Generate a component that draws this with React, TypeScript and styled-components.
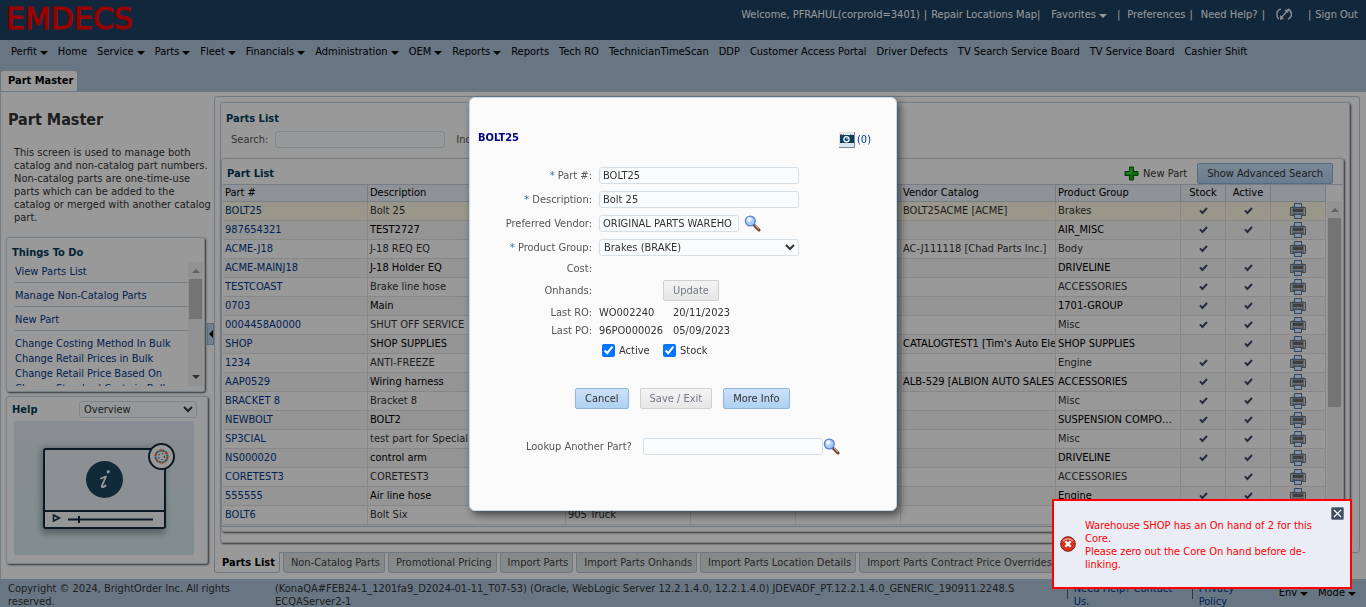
import React from 'react';
import styled, { createGlobalStyle } from 'styled-components';

const GlobalStyle = createGlobalStyle`
  * { box-sizing: border-box; }
  body {
    margin: 0;
    background: #adc4da;
    color: #333;
    overflow: hidden;
    font: 11px/13px Tahoma, 'DejaVu Sans Condensed', 'DejaVu Sans', sans-serif;
  }
  button, input, select { font: inherit; color: inherit; }
  a { color: #00398e; text-decoration: none; }
  h1, h2, p, ul { margin: 0; padding: 0; }
  ul { list-style: none; }
`;

const Page = styled.div`
  display: flex;
  flex-direction: column;
  min-height: 100vh;
`;

/* ---------- top bar ---------- */
const TopBar = styled.header`
  display: flex;
  justify-content: space-between;
  height: 40px;
  padding: 0 8px 0 6px;
  background: #1c4164;
  color: #fff;
  white-space: nowrap;
`;
const Logo = styled.div`
  color: #f00;
  font: 400 30px/37px 'DejaVu Sans', sans-serif;
  -webkit-text-stroke: 1px #f00;
`;
const TopLinks = styled.div`
  display: flex;
  align-items: center;
  height: 28px;
  a { color: #fff; }
`;
const Bar = styled.span<{ $before?: number; $after?: number }>`
  margin-left: ${p => p.$before ?? 0}px;
  margin-right: ${p => p.$after ?? 0}px;
`;
const Caret = styled.span`
  display: inline-block;
  margin-left: 3px;
  border: 4px solid transparent;
  border-top-color: currentColor;
  border-bottom: 0;
`;

/* ---------- navigation ---------- */
const Nav = styled.nav`
  height: 31px;
  padding: 5px 11px 0;
  background: #adc4da;
  ul { display: flex; gap: 10px; white-space: nowrap; }
  a { color: #000; }
`;
const PageTabs = styled.div`
  display: flex;
  padding-left: 1px;
  background: #adc4da;
`;
const PageTab = styled.a`
  height: 20px;
  padding: 0 4px 0 7px;
  border-radius: 3px 3px 0 0;
  background: #fff;
  color: #000;
  font-weight: 700;
  line-height: 20px;
`;

/* ---------- workspace ---------- */
const Workspace = styled.main`
  display: grid;
  grid-template-columns: 206px 7px minmax(0, 1fr);
  height: 488px;
  padding-right: 6px;
  border-left: 1px solid #c3d3e2;
  border-top: 1px solid #b6c8da;
  background: #fff;
`;
const Sidebar = styled.aside`
  padding: 19px 0 0 5px;
  h1 { margin-left: 2px; font-size: 16px; line-height: 18px; color: #333; }
`;
const Intro = styled.p`
  margin: 17px 0 13px 8px;
  white-space: nowrap;
`;
const Panel = styled.section<{ $w: number; $h: number }>`
  width: ${p => p.$w}px;
  height: ${p => p.$h}px;
  margin-bottom: 4px;
  border: 1px solid #c6d5e0;
  border-radius: 3px;
  box-shadow: 1px 1px 2px #555;
  overflow: hidden;
`;
const PanelTitle = styled.h2<{ $inset?: boolean }>`
  padding: ${p => (p.$inset ? '8px 5px 0' : '0')};
  font-size: 11px;
  line-height: 13px;
  color: #043c58;
`;
const TodoBox = styled.div`
  display: flex;
  height: 124px;
  margin: 3px 1px 0 8px;
  overflow: hidden;
`;
const TodoList = styled.ul`
  flex: 1;
  white-space: nowrap;
  overflow: hidden;
`;
const TodoItem = styled.li<{ $ruled?: boolean }>`
  height: ${p => (p.$ruled ? 24 : 15)}px;
  line-height: ${p => (p.$ruled ? 25 : 15)}px;
  border-bottom: ${p => (p.$ruled ? '1px solid #c0cfdc' : '0')};
  &:first-child { height: 21px; line-height: 19px; }
  &:nth-child(4) { margin-top: 5px; }
`;
const Track = styled.div`
  display: flex;
  flex-direction: column;
  align-items: center;
  width: 15px;
  background: #f4f4f4;
`;
const Thumb = styled.div<{ $h: number }>`
  width: 13px;
  height: ${p => p.$h}px;
  background: #c1c1c1;
`;
const Arrow = styled.span<{ $down?: boolean }>`
  margin: ${p => (p.$down ? 'auto 0 7px' : '7px 0 6px')};
  border: 4px solid transparent;
  ${p => (p.$down ? 'border-top-color: #505050; border-bottom: 0;' : 'border-bottom-color: #a3a3a3; border-top: 0;')}
`;
const HelpHead = styled.div`
  display: flex;
  justify-content: space-between;
  align-items: center;
  padding: 4px 10px 3px 5px;
`;
const HelpPicture = styled.div`
  padding-left: 7px;
  svg { display: block; }
`;
const Splitter = styled.button`
  display: flex;
  align-items: center;
  justify-content: center;
  align-self: start;
  width: 7px;
  height: 22px;
  margin-top: 231px;
  padding: 0;
  border: 1px solid #8fb2d6;
  background: #bcd7f5;
`;

const field = `
  height: 17px;
  padding: 0 3px;
  border: 1px solid #d6dfe6;
  border-radius: 3px;
  background: #fafdff;
`;
const TextBox = styled.input<{ $w: number }>`
  ${field}
  width: ${p => p.$w}px;
`;
const Picker = styled.select<{ $w: number }>`
  ${field}
  width: ${p => p.$w}px;
  padding: 0;
`;
const Button = styled.button`
  height: 21px;
  padding: 0 9px;
  border: 1px solid #8fb5dc;
  border-radius: 2px;
  background: linear-gradient(#cde2f8, #aed0f2);
  color: #333;
  line-height: 17px;
  white-space: nowrap;
  &:disabled {
    border-color: #d0d0d0;
    background: linear-gradient(#f4f4f4, #e6e6e6);
    color: #75788a;
  }
`;

/* ---------- parts panel ---------- */
const Content = styled.div`
  margin-top: 4px;
`;
const Frame = styled.div`
  height: 457px;
  padding: 5px 9px 9px 5px;
  border: 1px solid #bccad8;
  border-radius: 3px 3px 3px 0;
`;
const Card = styled.section`
  height: 441px;
  border: 1px solid #c9d3dc;
  border-radius: 3px;
  box-shadow: 1px 1px 2px #555;
`;
const CardHead = styled.div`
  height: 55px;
  padding: 9px 5px 0;
`;
const SearchRow = styled.div`
  display: flex;
  align-items: center;
  margin: 6px 0 0 5px;
  color: #555;
  input { margin: 0 11px 0 7px; }
`;
const ListCard = styled.section`
  height: 374px;
  margin-right: 5px;
  border: 1px solid #c9d3dc;
  border-radius: 3px;
  box-shadow: 1px 1px 2px #555;
`;
const ListHead = styled.div`
  display: flex;
  justify-content: space-between;
  align-items: center;
  height: 25px;
  padding: 4px 10px 0 5px;
`;
const Actions = styled.div`
  display: flex;
  align-items: center;
  gap: 10px;
  a { display: flex; align-items: center; gap: 4px; color: #333; }
`;
const TableArea = styled.div`
  display: flex;
  height: 343px;
  padding-left: 1px;
  border-bottom: 1px solid #b7c8d8;
  overflow: hidden;
`;
const Table = styled.table`
  flex: 1;
  width: 0;
  table-layout: fixed;
  border-collapse: separate;
  border-spacing: 0;
  align-self: flex-start;
  th, td {
    padding: 0 2px;
    border-right: 1px solid #e3e3e3;
    overflow: hidden;
    white-space: nowrap;
    text-align: left;
  }
  th {
    height: 18px;
    border-top: 1px solid #c6d0dd;
    border-right-color: #c6d0dd;
    border-bottom: 1px solid #c6d0dd;
    background: #eff3fb;
    color: #000;
    font-weight: 400;
    line-height: 16px;
  }
  td { height: 19px; border-bottom: 1px solid #e3e3e3; line-height: 18px; }
  th:nth-child(n + 8), td:nth-child(n + 8) { text-align: center; }
  td:nth-child(7) { text-overflow: ellipsis; padding-right: 6px; }
  svg { display: block; margin: 0 auto; }
`;
const Col = styled.col<{ $w: number }>`
  width: ${p => (p.$w ? `${p.$w}px` : 'auto')};
`;
const Row = styled.tr<{ $selected?: boolean }>`
  background: ${p => (p.$selected ? '#fffce4' : '#fff')};
  &:nth-child(even) { background: #f8f8f8; color: #000; }
`;
const TableTrack = styled.div`
  width: 17px;
  padding-top: 16px;
  border-top: 1px solid #c6d0dd;
  ${Track} { height: 326px; margin: 0 auto; }
`;
const BottomTabs = styled.div`
  display: flex;
  gap: 3px;
  white-space: nowrap;
`;
const BottomTab = styled.a<{ $active?: boolean }>`
  height: 21px;
  margin-top: -1px;
  padding: 0 4px 0 7px;
  border: 1px solid #b9c6d6;
  border-top-color: ${p => (p.$active ? '#fff' : '#b9c6d6')};
  border-radius: 0 0 3px 3px;
  background: ${p => (p.$active ? '#fff' : '#dfe5e6')};
  color: ${p => (p.$active ? '#000' : '#444')};
  font-weight: ${p => (p.$active ? 700 : 400)};
  line-height: 20px;
`;

/* ---------- footer ---------- */
const Footer = styled.footer`
  display: grid;
  grid-template-columns: 259px minmax(0, 1fr) 117px 79px auto auto;
  column-gap: 8px;
  height: 28px;
  padding: 3px 8px 0;
  background: #adc4da;
`;
const FootLink = styled.a`
  display: flex;
  gap: 6px;
  &::before { content: ''; width: 1px; height: 13px; margin-top: 4px; background: #555; }
`;
const FootMenu = styled.span`
  padding: 4px 2px 0 0;
  color: #000;
  white-space: nowrap;
`;

/* ---------- dialog ---------- */
const Overlay = styled.div`
  position: fixed;
  inset: 0;
  display: flex;
  align-items: center;
  justify-content: center;
  background: rgba(0, 0, 0, 0.4);
`;
const Dialog = styled.div`
  width: 428px;
  height: 414px;
  padding: 33px 8px 0;
  border: 1px solid #c3d9ee;
  border-radius: 6px;
  background: #fafafa;
  box-shadow: 3px 4px 8px rgba(0, 0, 0, 0.55);
`;
const DialogHead = styled.div`
  display: flex;
  justify-content: space-between;
  height: 33px;
  padding-right: 17px;
  h2 { font-size: 11px; line-height: 14px; color: #000080; }
  a { display: flex; align-items: center; gap: 2px; height: 18px; }
`;
const FormRow = styled.div<{ $h: number }>`
  display: grid;
  grid-template-columns: 114px 1fr;
  column-gap: 7px;
  align-items: center;
  height: ${p => p.$h}px;
  i { color: #2a72a8; font-style: normal; }
`;
const FormLabel = styled.label`
  text-align: right;
  color: #555;
  white-space: nowrap;
`;
const Inline = styled.div<{ $gap?: number; $indent?: number }>`
  display: flex;
  align-items: center;
  gap: ${p => p.$gap ?? 0}px;
  padding-left: ${p => p.$indent ?? 0}px;
`;
const Value = styled.span`
  width: 74px;
`;
const Check = styled.label`
  display: flex;
  align-items: center;
  gap: 4px;
  width: 61px;
  input { width: 13px; height: 13px; margin: 0; }
`;
const ButtonRow = styled.div`
  display: flex;
  gap: 11px;
  margin: 26px 0 29px 97px;
`;
const Lookup = styled.div`
  display: flex;
  align-items: center;
  padding-left: 48px;
  color: #555;
  input { margin-left: 11px; }
`;
const IconButton = styled.button`
  display: flex;
  padding: 0;
  border: 0;
  background: none;
`;

/* ---------- error toast ---------- */
const Toast = styled.div`
  position: fixed;
  right: 14px;
  bottom: 18px;
  display: flex;
  align-items: center;
  gap: 9px;
  width: 300px;
  height: 90px;
  padding: 0 6px;
  border: 2px solid #f00;
  background: #eaedf6;
  color: #f00;
  p { flex: 1; padding-top: 1px; white-space: nowrap; }
  button { align-self: flex-start; margin-top: 6px; }
`;

/* ---------- icons ---------- */
const CheckIcon = () => (
  <svg width="9" height="8" viewBox="0 0 9 8">
    <path d="M1 3.400 L3.400 6 L8 1" fill="none" stroke="#3f4a66" strokeWidth="2" />
  </svg>
);
const PrinterIcon = () => (
  <svg width="16" height="16" viewBox="0 0 16 16">
    <path d="M0.500 4.500h3v8h-3zM12.500 4.500h3v8h-3z" fill="#d4d8dc" stroke="#777" />
    <rect x="3" y="4" width="10" height="8" fill="#9a9da2" stroke="#777" />
    <rect x="4.500" y="0.500" width="7" height="4" fill="#e6f3ff" stroke="#4b7fb2" />
    <path d="M3 6h10v3H3z" fill="#66696d" />
    <path d="M3 9.500h10" stroke="#b8bbc0" />
    <rect x="4.500" y="11.500" width="7" height="4" fill="#e6f3ff" stroke="#4b7fb2" />
  </svg>
);
const Magnifier = () => (
  <svg width="17" height="17" viewBox="0 0 17 17">
    <path d="M10.500 10.500 L15 15" stroke="#6b3d2c" strokeWidth="3" strokeLinecap="round" />
    <path d="M11 10.200 L15 14.200" stroke="#d2a083" strokeWidth="1.200" />
    <circle cx="6.300" cy="6" r="4.900" fill="#a6cdfa" stroke="#5a82cc" strokeWidth="1.300" />
    <circle cx="5.200" cy="4.600" r="2.400" fill="#e9f5ff" />
  </svg>
);
const CameraIcon = () => (
  <svg width="16" height="16" viewBox="0 0 16 16">
    <rect width="16" height="16" fill="#dce4ee" />
    <path d="M15.500 0v15.500H0" fill="none" stroke="#7d8794" />
    <path d="M1 3h3l1-1h6l1 1h3v8H1z" fill="#0b3f60" />
    <path d="M5 2h6v1H5z" fill="#fff" />
    <circle cx="7.500" cy="7.200" r="3.200" fill="#fff" />
    <circle cx="7.500" cy="7.200" r="1.900" fill="#0b3f60" />
    <circle cx="8" cy="6.800" r="0.800" fill="#cfe6f6" />
    <rect x="1" y="2" width="2" height="1" fill="#e07050" />
  </svg>
);
const PlusIcon = () => (
  <svg width="15" height="15" viewBox="0 0 15 15">
    <path d="M5.500 1h4v4.500h4.500v4h-4.500v4.500h-4v-4.500H1v-4h4.500z" fill="#19b219" stroke="#075c07" />
    <path d="M7 2.500v4.500H2.500" fill="none" stroke="#7fe87f" />
  </svg>
);
const LinkIcon = () => (
  <svg width="18" height="13" viewBox="0 0 18 13">
    <g fill="none" stroke="#dfe5ea" strokeWidth="1.500">
      <path d="M5 1C0 2 0 9 3 11" />
      <path d="M12 1c4 2 5 8 0 10" />
      <path d="M5 10 12 2" />
    </g>
    <path d="M4 12l0-5 4 3.500zM13 1l-5 1 4 3z" fill="#dfe5ea" />
  </svg>
);
const ErrorIcon = () => (
  <svg width="16" height="16" viewBox="0 0 16 16">
    <circle cx="8" cy="8" r="7.300" fill="#d8321c" stroke="#7a1c14" />
    <path d="M3 5a6 5 0 0 1 10 0" fill="none" stroke="#f09a86" strokeWidth="1.500" />
    <path d="M5.300 5.300l5.400 5.400M10.700 5.300l-5.400 5.400" stroke="#fff" strokeWidth="2.200" />
  </svg>
);
const CloseIcon = () => (
  <svg width="13" height="13" viewBox="0 0 13 13">
    <rect x="0.500" y="0.500" width="12" height="12" rx="1" fill="#3f4f60" stroke="#6e7f90" />
    <path d="M3 3l7 7M10 3l-7 7" stroke="#fff" strokeWidth="1.200" />
  </svg>
);
const HelpArt = () => (
  <svg width="180" height="134" viewBox="0 0 180 134">
    <defs>
      <linearGradient id="sky" x1="0" y1="0" x2="0" y2="1">
        <stop offset="0" stopColor="#e2ecf4" />
        <stop offset="1" stopColor="#d9eceb" />
      </linearGradient>
      <filter id="soft" x="-20%" y="-20%" width="140%" height="140%">
        <feGaussianBlur stdDeviation="3" />
      </filter>
    </defs>
    <rect width="180" height="134" fill="url(#sky)" />
    <rect x="27" y="27" width="124" height="86" rx="3" fill="#738891" opacity="0.700" filter="url(#soft)" />
    <rect x="30" y="28" width="121" height="79" rx="2" fill="#ebf1f6" stroke="#14293c" strokeWidth="2" />
    <rect x="31" y="91" width="119" height="15" fill="#f8fafb" />
    <path d="M30 90h121" stroke="#14293c" strokeWidth="2" />
    <path d="M39.500 94v6l6-3z" fill="none" stroke="#14293c" strokeWidth="1.500" />
    <path d="M54 98.500h85M65 95v7" stroke="#14293c" strokeWidth="2" />
    <circle cx="90.500" cy="58.500" r="18.500" fill="#1c4760" />
    <g fill="none" stroke="#fff" strokeWidth="1.800" strokeLinecap="round" strokeLinejoin="round">
      <path d="M87 57.500l5-2-4 9c-1 2 1 2.500 3.500 0" />
      <path d="M94 51l0.400-0.400" strokeWidth="2.800" />
    </g>
    <circle cx="147.500" cy="35.500" r="12.500" fill="#fff" stroke="#14293c" strokeWidth="2" />
    <circle cx="147.500" cy="35.500" r="6" fill="none" stroke="#e8763c" strokeWidth="2.400" strokeDasharray="3 3.280" />
    <circle cx="147.500" cy="35.500" r="6" fill="none" stroke="#3f94c4" strokeWidth="2.200" strokeDasharray="2.500 3.780" strokeDashoffset="3" />
    <circle cx="147.500" cy="35.500" r="3" fill="none" stroke="#3c6f94" strokeWidth="1.200" strokeDasharray="1.500 2" />
  </svg>
);

/* ---------- data ---------- */
const menu: [string, boolean][] = [
  ['Perfit', true], ['Home', false], ['Service', true], ['Parts', true], ['Fleet', true],
  ['Financials', true], ['Administration', true], ['OEM', true], ['Reports', true],
  ['Reports', false], ['Tech RO', false], ['TechnicianTimeScan', false], ['DDP', false],
  ['Customer Access Portal', false], ['Driver Defects', false],
  ['TV Search Service Board', false], ['TV Service Board', false], ['Cashier Shift', false],
];

type Part = { id: string; desc: string; vendor?: string; group: string; make?: string; stock?: boolean; active?: boolean };
const parts: Part[] = [
  { id: 'BOLT25', desc: 'Bolt 25', vendor: 'BOLT25ACME [ACME]', group: 'Brakes', stock: true, active: true },
  { id: '987654321', desc: 'TEST2727', group: 'AIR_MISC', stock: true, active: true },
  { id: 'ACME-J18', desc: 'J-18 REQ EQ', vendor: 'AC-J111118 [Chad Parts Inc.]', group: 'Body', stock: true },
  { id: 'ACME-MAINJ18', desc: 'J-18 Holder EQ', group: 'DRIVELINE', stock: true, active: true },
  { id: 'TESTCOAST', desc: 'Brake line hose', group: 'ACCESSORIES', stock: true, active: true },
  { id: '0703', desc: 'Main', group: '1701-GROUP', stock: true, active: true },
  { id: '0004458A0000', desc: 'SHUT OFF SERVICE', group: 'Misc', stock: true, active: true },
  { id: 'SHOP', desc: 'SHOP SUPPLIES', vendor: "CATALOGTEST1 [Tim's Auto Ele", group: 'SHOP SUPPLIES', active: true },
  { id: '1234', desc: 'ANTI-FREEZE', group: 'Engine', stock: true, active: true },
  { id: 'AAP0529', desc: 'Wiring harness', vendor: 'ALB-529 [ALBION AUTO SALES', group: 'ACCESSORIES', stock: true, active: true },
  { id: 'BRACKET 8', desc: 'Bracket 8', group: 'Misc', stock: true, active: true },
  { id: 'NEWBOLT', desc: 'BOLT2', group: 'SUSPENSION COMPONENTS', stock: true, active: true },
  { id: 'SP3CIAL', desc: 'test part for Special', group: 'Misc', stock: true, active: true },
  { id: 'NS000020', desc: 'control arm', group: 'DRIVELINE', stock: true, active: true },
  { id: 'CORETEST3', desc: 'CORETEST3', group: 'ACCESSORIES', active: true },
  { id: '555555', desc: 'Air line hose', group: 'Engine', stock: true, active: true },
  { id: 'BOLT6', desc: 'Bolt Six', make: '905 Truck', group: '' },
  { id: '', desc: '', group: '' },
];
const columns: [string, number][] = [
  ['Part #', 145], ['Description', 0], ['', 125], ['', 105], ['', 105],
  ['Vendor Catalog', 155], ['Product Group', 125], ['Stock', 45], ['Active', 45], ['', 55],
];
const tabs = [
  'Parts List', 'Non-Catalog Parts', 'Promotional Pricing', 'Import Parts', 'Import Parts Onhands',
  'Import Parts Location Details', 'Import Parts Contract Price Overrides',
];

const PartsTable = () => (
  <Table>
    <colgroup>{columns.map(([, w], i) => <Col key={i} $w={w} />)}</colgroup>
    <thead>
      <tr>{columns.map(([name], i) => <th key={i}>{name}</th>)}</tr>
    </thead>
    <tbody>
      {parts.map((p, i) => (
        <Row key={i} $selected={i === 0}>
          <td><a href="#part">{p.id}</a></td>
          <td>{p.desc}</td>
          <td>{p.make}</td>
          <td />
          <td />
          <td>{p.vendor}</td>
          <td>{p.group}</td>
          <td>{p.stock && <CheckIcon />}</td>
          <td>{p.active && <CheckIcon />}</td>
          <td>{p.group && <PrinterIcon />}</td>
        </Row>
      ))}
    </tbody>
  </Table>
);

const PartDialog = () => (
  <Overlay>
    <Dialog role="dialog" aria-label="BOLT25">
      <DialogHead>
        <h2>BOLT25</h2>
        <a href="#photos"><CameraIcon />(0)</a>
      </DialogHead>
      <FormRow $h={24}>
        <FormLabel htmlFor="part"><i>*</i> Part #:</FormLabel>
        <TextBox id="part" $w={200} defaultValue="BOLT25" />
      </FormRow>
      <FormRow $h={24}>
        <FormLabel htmlFor="desc"><i>*</i> Description:</FormLabel>
        <TextBox id="desc" $w={200} defaultValue="Bolt 25" />
      </FormRow>
      <FormRow $h={24}>
        <FormLabel htmlFor="vendor">Preferred Vendor:</FormLabel>
        <Inline $gap={5}>
          <TextBox id="vendor" $w={140} defaultValue="ORIGINAL PARTS WAREHO" />
          <IconButton aria-label="Find vendor"><Magnifier /></IconButton>
        </Inline>
      </FormRow>
      <FormRow $h={24}>
        <FormLabel htmlFor="group"><i>*</i> Product Group:</FormLabel>
        <Picker id="group" $w={200}><option>Brakes (BRAKE)</option></Picker>
      </FormRow>
      <FormRow $h={18}>
        <FormLabel as="span">Cost:</FormLabel>
      </FormRow>
      <FormRow $h={26}>
        <FormLabel as="span">Onhands:</FormLabel>
        <Inline $indent={64}><Button disabled>Update</Button></Inline>
      </FormRow>
      <FormRow $h={18}>
        <FormLabel as="span">Last RO:</FormLabel>
        <Inline><Value>WO002240</Value><span>20/11/2023</span></Inline>
      </FormRow>
      <FormRow $h={18}>
        <FormLabel as="span">Last PO:</FormLabel>
        <Inline><Value>96PO000026</Value><span>05/09/2023</span></Inline>
      </FormRow>
      <FormRow $h={22}>
        <span />
        <Inline $indent={3}>
          <Check><input type="checkbox" defaultChecked />Active</Check>
          <Check><input type="checkbox" defaultChecked />Stock</Check>
        </Inline>
      </FormRow>
      <ButtonRow>
        <Button>Cancel</Button>
        <Button disabled>Save / Exit</Button>
        <Button>More Info</Button>
      </ButtonRow>
      <Lookup>
        <label htmlFor="lookup">Lookup Another Part?</label>
        <TextBox id="lookup" $w={180} />
        <IconButton aria-label="Find part"><Magnifier /></IconButton>
      </Lookup>
    </Dialog>
  </Overlay>
);

export default function App() {
  return (
    <>
      <GlobalStyle />
      <Page>
        <TopBar>
          <Logo>EMDECS</Logo>
          <TopLinks>
            <span>Welcome, PFRAHUL(corproId=3401)</span>
            <Bar $before={4} $after={4}>|</Bar>
            <a href="#map">Repair Locations Map</a>
            <Bar $after={11}>|</Bar>
            <a href="#fav">Favorites<Caret /></a>
            <Bar $before={10} $after={7}>|</Bar>
            <a href="#prefs">Preferences</a>
            <Bar $before={4} $after={8}>|</Bar>
            <a href="#help">Need Help?</a>
            <Bar $before={4} $after={11}>|</Bar>
            <LinkIcon />
            <Bar $before={14} $after={4}>|</Bar>
            <a href="#out">Sign Out</a>
          </TopLinks>
        </TopBar>
        <Nav>
          <ul>
            {menu.map(([name, sub], i) => (
              <li key={i}><a href="#menu">{name}{sub && <Caret />}</a></li>
            ))}
          </ul>
        </Nav>
        <PageTabs><PageTab href="#part-master">Part Master</PageTab></PageTabs>

        <Workspace>
          <Sidebar>
            <h1>Part Master</h1>
            <Intro>
              This screen is used to manage both<br />catalog and non-catalog part numbers.<br />
              Non-catalog parts are one-time-use<br />parts which can be added to the<br />
              catalog or merged with another catalog<br />part.
            </Intro>
            <Panel $w={199} $h={155}>
              <PanelTitle $inset>Things To Do</PanelTitle>
              <TodoBox>
                <TodoList>
                  <TodoItem $ruled><a href="#list">View Parts List</a></TodoItem>
                  <TodoItem $ruled><a href="#manage">Manage Non-Catalog Parts</a></TodoItem>
                  <TodoItem $ruled><a href="#new">New Part</a></TodoItem>
                  <TodoItem><a href="#costing">Change Costing Method In Bulk</a></TodoItem>
                  <TodoItem><a href="#retail">Change Retail Prices in Bulk</a></TodoItem>
                  <TodoItem><a href="#based">Change Retail Price Based On</a></TodoItem>
                  <TodoItem><a href="#standard">Change Standard Costs in Bulk</a></TodoItem>
                </TodoList>
                <Track><Arrow /><Thumb $h={40} /><Arrow $down /></Track>
              </TodoBox>
            </Panel>
            <Panel $w={202} $h={168}>
              <HelpHead>
                <PanelTitle><label htmlFor="help">Help</label></PanelTitle>
                <Picker id="help" $w={118}><option>Overview</option></Picker>
              </HelpHead>
              <HelpPicture><HelpArt /></HelpPicture>
            </Panel>
          </Sidebar>
          <Splitter aria-label="Collapse">
            <svg width="4" height="8" viewBox="0 0 4 8"><path d="M4 0v8L0 4z" /></svg>
          </Splitter>
          <Content>
            <Frame>
              <Card>
                <CardHead>
                  <PanelTitle>Parts List</PanelTitle>
                  <SearchRow>
                    <label htmlFor="search">Search:</label>
                    <TextBox id="search" $w={170} />
                    <span>Inc</span>
                  </SearchRow>
                </CardHead>
                <ListCard>
                  <ListHead>
                    <PanelTitle>Part List</PanelTitle>
                    <Actions>
                      <a href="#new"><PlusIcon />New Part</a>
                      <Button>Show Advanced Search</Button>
                    </Actions>
                  </ListHead>
                  <TableArea>
                    <PartsTable />
                    <TableTrack>
                      <Track><Arrow /><Thumb $h={189} /></Track>
                    </TableTrack>
                  </TableArea>
                </ListCard>
              </Card>
            </Frame>
            <BottomTabs>
              {tabs.map((t, i) => <BottomTab key={t} href="#tab" $active={i === 0}>{t}</BottomTab>)}
            </BottomTabs>
          </Content>
        </Workspace>

        <Footer>
          <span>Copyright © 2024, BrightOrder Inc. All rights<br />reserved.</span>
          <span>
            (KonaQA#FEB24-1_1201fa9_D2024-01-11_T07-53) (Oracle, WebLogic Server 12.2.1.4.0, 12.2.1.4.0)
            JDEVADF_PT.12.2.1.4.0_GENERIC_190911.2248.S<br />ECQAServer2-1
          </span>
          <FootLink href="#contact"><span>Need Help? Contact<br />Us.</span></FootLink>
          <FootLink href="#privacy"><span>Privacy<br />Policy</span></FootLink>
          <FootMenu>Env<Caret /></FootMenu>
          <FootMenu>Mode<Caret /></FootMenu>
        </Footer>
      </Page>

      <PartDialog />
      <Toast role="alert">
        <ErrorIcon />
        <p>
          Warehouse SHOP has an On hand of 2 for this<br />Core.<br />
          Please zero out the Core On hand before de-<br />linking.
        </p>
        <IconButton aria-label="Close"><CloseIcon /></IconButton>
      </Toast>
    </>
  );
}
